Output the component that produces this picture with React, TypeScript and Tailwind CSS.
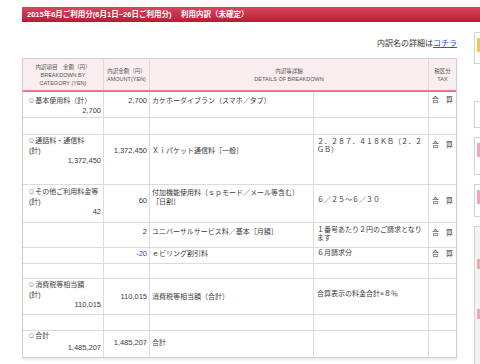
const font = "font-['Liberation_Sans','Noto_Sans_CJK_JP',sans-serif]";

type Row = {
  h: string;
  label?: string[];
  total?: string;
  c1pt?: string;
  amount?: string;
  amountBlue?: boolean;
  c2pt?: string;
  detail?: string[];
  c3pt?: string;
  note?: string[];
  c4pt?: string;
  tax?: boolean;
  c5pt?: string;
  last?: boolean;
};

const rows: Row[] = [
  {
    h: "h-[26px]",
    label: ["基本使用料（計）"],
    total: "2,700",
    c1pt: "pt-[4px]",
    amount: "2,700",
    c2pt: "pt-[4px]",
    detail: ["カケホーダイプラン（スマホ／タブ）"],
    c3pt: "pt-[4px]",
    tax: true,
    c5pt: "pt-[3px]",
  },
  { h: "h-[17px]" },
  {
    h: "h-[50px]",
    label: ["通話料・通信料", "(計)"],
    total: "1,372,450",
    c1pt: "pt-[1px]",
    amount: "1,372,450",
    c2pt: "pt-[11px]",
    detail: ["Ｘｉパケット通信料［一般］"],
    c3pt: "pt-[11px]",
    note: ["２．２８７．４１８ＫＢ（２．２", "ＧＢ）"],
    c4pt: "pt-[3px]",
    tax: true,
    c5pt: "pt-[5px]",
  },
  {
    h: "h-[38px]",
    label: ["その他ご利用料金等", "(計)"],
    total: "42",
    c1pt: "pt-[2px]",
    amount: "60",
    c2pt: "pt-[11px]",
    detail: ["付加機能使用料（ｓｐモード／メール等含む）", "［日割］"],
    c3pt: "pt-[3px]",
    note: ["６／２５～６／３０"],
    c4pt: "pt-[11px]",
    tax: true,
    c5pt: "pt-[11px]",
  },
  {
    h: "h-[25px]",
    amount: "2",
    c2pt: "pt-[4px]",
    detail: ["ユニバーサルサービス料／基本［月額］"],
    c3pt: "pt-[4px]",
    note: ["１番号あたり２円のご請求となり", "ます"],
    c4pt: "pt-[3px]",
    tax: true,
    c5pt: "pt-[5px]",
  },
  {
    h: "h-[16px]",
    amount: "-20",
    amountBlue: true,
    c2pt: "pt-[1px]",
    detail: ["ｅビリング割引料"],
    c3pt: "pt-[1px]",
    note: ["６月請求分"],
    c4pt: "pt-[1px]",
    tax: true,
    c5pt: "pt-[1px]",
  },
  { h: "h-[15px]" },
  {
    h: "h-[36px]",
    label: ["消費税等相当額", "(計)"],
    total: "110,015",
    c1pt: "pt-[1px]",
    amount: "110,015",
    c2pt: "pt-[13px]",
    detail: ["消費税等相当額（合計）"],
    c3pt: "pt-[13px]",
    note: ["合算表示の料金合計×８％"],
    c4pt: "pt-[11px]",
  },
  { h: "h-[16px]" },
  {
    h: "h-[26px]",
    label: ["合計"],
    total: "1,485,207",
    c1pt: "pt-[0px]",
    amount: "1,485,207",
    c2pt: "pt-[7px]",
    detail: ["合計"],
    c3pt: "pt-[7px]",
    last: true,
  },
];

const BodyRow = ({ r }: { r: Row }) => (
  <div
    className={`flex ${r.h} ${r.last ? "" : "border-b border-[#dcdcdc]"} text-[7px] text-[#3a3a3a]`}
  >
    <div className={`w-[81px] shrink-0 border-r border-[#dcdcdc] pl-[6px] pr-[2px] leading-[10px] ${r.c1pt ?? ""}`}>
      {r.label?.map((l, i) => (
        <div key={l} className="whitespace-nowrap">
          {i === 0 ? (
            <span className="inline-block align-[1px] mr-[1.5px] text-[5.5px] leading-[5px] font-['DejaVu_Sans',sans-serif]">
              ○
            </span>
          ) : null}
          {l}
        </div>
      ))}
      {r.total && (
        <div className={`text-right text-[7.5px] ${r.last ? "mt-[2px]" : ""}`}>{r.total}</div>
      )}
    </div>
    <div
      className={`w-[46px] shrink-0 border-r border-[#dcdcdc] pr-[2px] text-right text-[7.5px] leading-[10px] ${r.c2pt ?? ""} ${r.amountBlue ? "text-[#3048d0]" : ""}`}
    >
      {r.amount}
    </div>
    <div className={`w-[164px] shrink-0 border-r border-[#dcdcdc] pl-[2px] leading-[9px] ${r.c3pt ?? ""}`}>
      {r.detail?.map((l) => (
        <div key={l} className="whitespace-nowrap">
          {l}
        </div>
      ))}
    </div>
    <div className={`w-[115px] shrink-0 border-r border-[#dcdcdc] pl-[3px] leading-[8px] ${r.c4pt ?? ""}`}>
      {r.note?.map((l) => (
        <div key={l} className="whitespace-nowrap">
          {l}
        </div>
      ))}
    </div>
    <div className={`flex-1 text-center leading-[10px] ${r.c5pt ?? ""}`}>{r.tax ? "合　算" : ""}</div>
  </div>
);

const SideBox = ({ h, accent, tall }: { h: string; accent?: string; tall?: boolean }) => (
  <div className={`${h} border border-[#d4d4d4] ${tall ? "bg-[#f3f3f3]" : "bg-white"} p-[2px]`}>
    {accent && <div className={`w-[3px] h-[14px] mt-[3px] ${accent}`} />}
    {tall && (
      <div className="flex flex-col gap-[40px] mt-[30px]">
        <div className="w-[3px] h-[10px] bg-[#f0a8b4]" />
        <div className="w-[3px] h-[10px] bg-[#f0a8b4]" />
      </div>
    )}
  </div>
);

export default function App() {
  return (
    <div className={`w-[480px] h-[364px] overflow-hidden bg-white pl-[22px] pt-[7px] ${font}`}>
      <div className="h-[15px] w-[480px] bg-linear-to-b from-[#d9465e] to-[#b91932] pl-[5px] text-[7.5px] font-bold leading-[15px] text-white whitespace-nowrap">
        2015年6月ご利用分(6月1日~26日ご利用分)　 利用内訳（未確定）
      </div>
      <div className="flex gap-[17px]">
        <div className="w-[435px] shrink-0">
          <div className="mt-[17px] h-[19px] text-right text-[8px] leading-[10px] text-[#333]">
            内訳名の詳細は<span className="text-[#3353c8] underline">コチラ</span>
          </div>
          <div className="border border-[#d0d0d0] shadow-[0_2px_2px_rgba(0,0,0,0.08)]">
            <div className="flex h-[33px] border-b-2 border-[#de7a8c] bg-[#fbeef0] text-center text-[5.5px] leading-[8px] text-[#555]">
              <div className="w-[81px] shrink-0 border-r border-[#dcdcdc] flex flex-col justify-center">
                <div>内訳項目　金額（円）</div>
                <div>BREAKDOWN BY</div>
                <div>CATEGORY (YEN)</div>
              </div>
              <div className="w-[46px] shrink-0 border-r border-[#dcdcdc] flex flex-col justify-center">
                <div>内訳金額（円）</div>
                <div>AMOUNT(YEN)</div>
              </div>
              <div className="w-[279px] shrink-0 border-r border-[#dcdcdc] flex flex-col justify-center">
                <div>内訳等詳細</div>
                <div>DETAILS OF BREAKDOWN</div>
              </div>
              <div className="flex-1 flex flex-col justify-center">
                <div>税区分</div>
                <div>TAX</div>
              </div>
            </div>
            {rows.map((r, i) => (
              <BodyRow key={i} r={r} />
            ))}
          </div>
        </div>
        <div className="w-[200px] shrink-0 pt-[10px] flex flex-col gap-[9px]">
          <SideBox h="h-[32px]" accent="bg-[#f3c650]" />
          <div className="h-[19px]" />
          <SideBox h="h-[27px]" />
          <SideBox h="h-[38px]" accent="bg-[#f0a8b4]" />
          <SideBox h="h-[33px]" accent="bg-[#f0a8b4]" />
          <SideBox h="h-[160px]" tall />
        </div>
      </div>
    </div>
  );
}
